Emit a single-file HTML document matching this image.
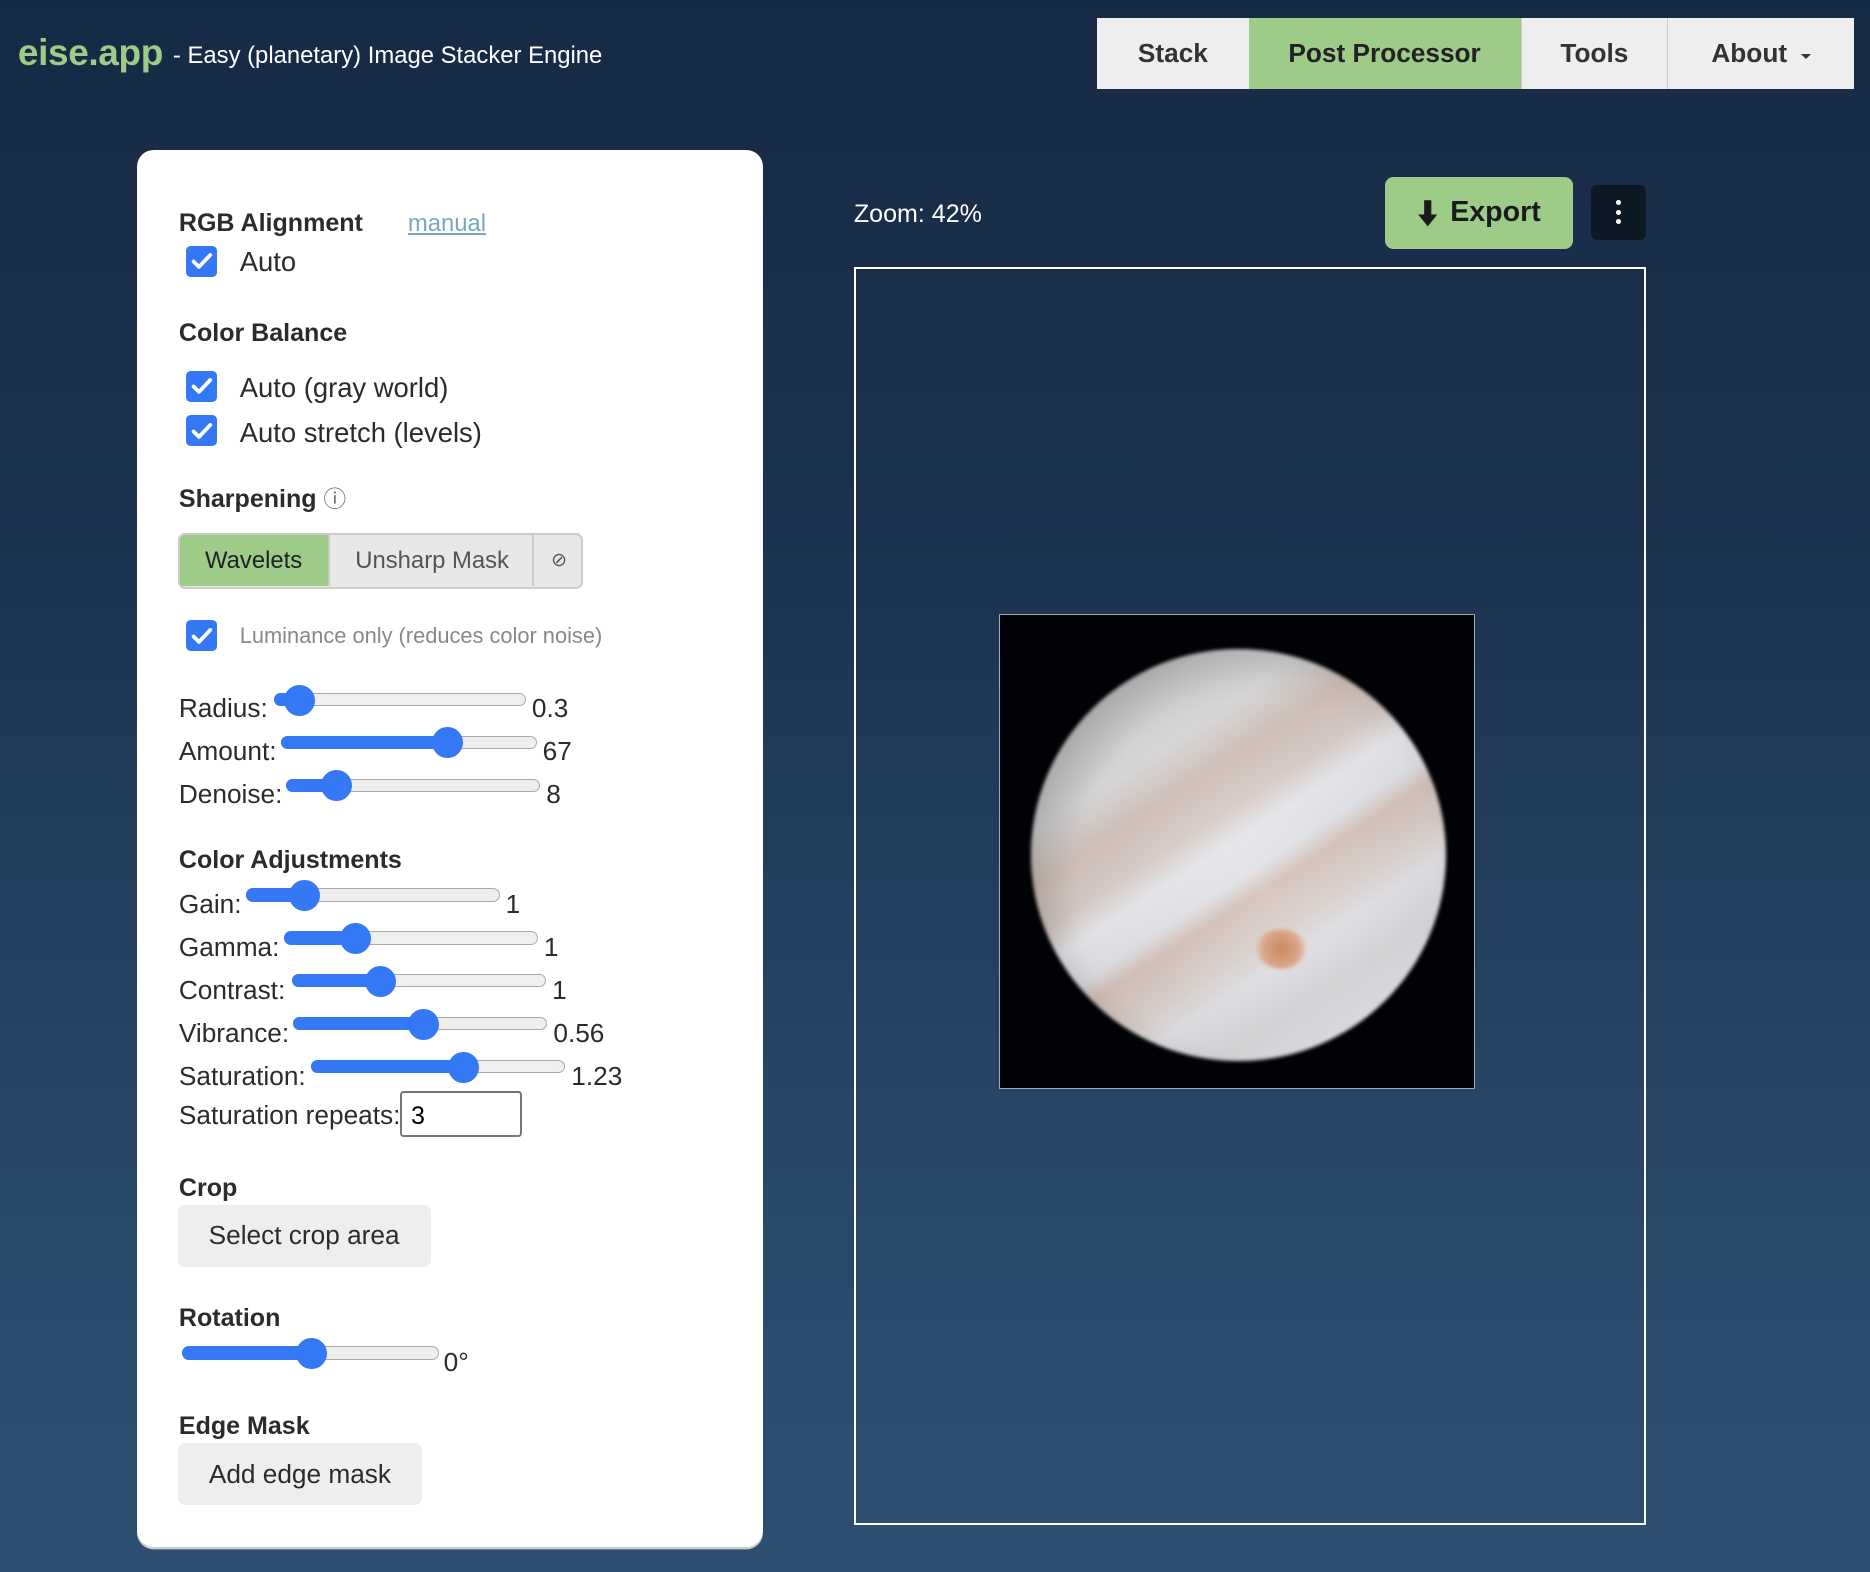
<!DOCTYPE html>
<html><head><meta charset="utf-8">
<style>
html,body{margin:0;padding:0;width:1870px;height:1572px;overflow:hidden;}
body{background:linear-gradient(180deg,#172a45 0%,#1c3350 35%,#2a4a6c 80%,#2d5072 100%);font-family:"Liberation Sans",Arial,sans-serif;}
#w{zoom:1.19260;position:relative;width:1568px;height:1318px;}
.a{position:absolute;white-space:nowrap;line-height:1;}
.nav{position:absolute;top:15px;height:60px;background:#eeeeee;color:#333;font-weight:bold;font-size:22px;display:flex;align-items:center;justify-content:center;box-sizing:border-box;}
.panel{position:absolute;left:115px;top:126px;width:525px;height:1171px;background:#fff;border-radius:14px;box-shadow:0 2px 0 #ccc;}
.h{position:absolute;font-weight:bold;font-size:21px;color:#2b2b2b;line-height:1;white-space:nowrap;}
.t{position:absolute;font-size:22px;color:#2b2b2b;line-height:1;white-space:nowrap;}
.c{font-size:23px;}
.cb{position:absolute;width:26px;height:26px;background:#3478f6;border-radius:4px;}
.cb svg{position:absolute;left:3px;top:3px;}
.tr{position:absolute;height:11px;background:#efefef;border:1px solid #aaa;border-radius:7px;box-sizing:border-box;}
.fi{position:absolute;height:11px;background:#3478f6;border-radius:7px;}
.th{position:absolute;width:26px;height:26px;border-radius:50%;background:#3478f6;}
.btn{position:absolute;background:#eeeeee;border-radius:6px;font-size:22px;color:#2b2b2b;display:flex;align-items:center;justify-content:center;}
</style></head><body><div id="w">

<div class="a" style="left:15px;top:29px;font-size:31px;color:#9ccc87;font-weight:bold;letter-spacing:-0.3px">eise.app</div>
<div class="a" style="left:145px;top:37px;font-size:20px;color:#fff">- Easy (planetary) Image Stacker Engine</div>

<div class="nav" style="left:920px;width:127px">Stack</div>
<div class="nav" style="left:1047px;width:228px;background:#9ccc87;color:#222">Post Processor</div>
<div class="nav" style="left:1275px;width:123px;border-left:1px solid #ccc">Tools</div>
<div class="nav" style="left:1398px;width:157px;border-left:1px solid #ccc">About <span style="display:inline-block;margin-left:12px;border-left:5px solid transparent;border-right:5px solid transparent;border-top:5px solid #333;margin-top:4px"></span></div>

<div class="panel"></div>
<div class="h" style="left:150px;top:177px">RGB Alignment</div>
<div class="t" style="left:342px;top:178px;font-size:20px;color:#7aa7bf;text-decoration:underline">manual</div>
<div class="cb" style="left:156px;top:206px"><svg width="20" height="20" viewBox="0 0 20 20"><path d="M3 10.5l4.5 4.5L17 5" stroke="#fff" stroke-width="3.2" fill="none" stroke-linecap="round" stroke-linejoin="round"/></svg></div>
<div class="t c" style="left:201px;top:208px">Auto</div>

<div class="h" style="left:150px;top:269px">Color Balance</div>
<div class="cb" style="left:156px;top:311px"><svg width="20" height="20" viewBox="0 0 20 20"><path d="M3 10.5l4.5 4.5L17 5" stroke="#fff" stroke-width="3.2" fill="none" stroke-linecap="round" stroke-linejoin="round"/></svg></div>
<div class="t c" style="left:201px;top:314px">Auto (gray world)</div>
<div class="cb" style="left:156px;top:348px"><svg width="20" height="20" viewBox="0 0 20 20"><path d="M3 10.5l4.5 4.5L17 5" stroke="#fff" stroke-width="3.2" fill="none" stroke-linecap="round" stroke-linejoin="round"/></svg></div>
<div class="t c" style="left:201px;top:351px">Auto stretch (levels)</div>

<div class="h" style="left:150px;top:408px">Sharpening <span style="font-weight:normal;color:#666;font-size:19px">ⓘ</span></div>
<div style="position:absolute;left:149px;top:447px;width:340px;height:47px;border:2px solid #ccc;border-radius:6px;box-sizing:border-box;background:#e8e8e8;overflow:hidden">
 <div style="position:absolute;left:0;top:0;width:124px;height:43px;background:#9ccc87;font-size:20px;color:#222;display:flex;align-items:center;justify-content:center">Wavelets</div>
 <div style="position:absolute;left:124px;top:0;width:172px;height:43px;border-left:2px solid #ccc;font-size:20px;color:#555;display:flex;align-items:center;justify-content:center">Unsharp Mask</div>
 <div style="position:absolute;left:295px;top:0;width:43px;height:43px;border-left:2px solid #ccc;font-size:16px;color:#555;display:flex;align-items:center;justify-content:center">⊘</div>
</div>
<div class="cb" style="left:156px;top:520px"><svg width="20" height="20" viewBox="0 0 20 20"><path d="M3 10.5l4.5 4.5L17 5" stroke="#fff" stroke-width="3.2" fill="none" stroke-linecap="round" stroke-linejoin="round"/></svg></div>
<div class="t" style="left:201px;top:524px;font-size:18.3px;color:#888">Luminance only (reduces color noise)</div>

<div class="t" style="left:150px;top:583px">Radius:</div>
<div class="tr" style="left:230px;top:581px;width:211px"></div><div class="fi" style="left:230px;top:581px;width:22px"></div><div class="th" style="left:238px;top:574px"></div>
<div class="t" style="left:446px;top:583px">0.3</div>

<div class="t" style="left:150px;top:619px">Amount:</div>
<div class="tr" style="left:236px;top:617px;width:214px"></div><div class="fi" style="left:236px;top:617px;width:140px"></div><div class="th" style="left:362px;top:610px"></div>
<div class="t" style="left:455px;top:619px">67</div>

<div class="t" style="left:150px;top:655px">Denoise:</div>
<div class="tr" style="left:240px;top:653px;width:213px"></div><div class="fi" style="left:240px;top:653px;width:43px"></div><div class="th" style="left:269px;top:646px"></div>
<div class="t" style="left:458px;top:655px">8</div>

<div class="h" style="left:150px;top:711px">Color Adjustments</div>

<div class="t" style="left:150px;top:747px">Gain:</div>
<div class="tr" style="left:206px;top:745px;width:213px"></div><div class="fi" style="left:206px;top:745px;width:50px"></div><div class="th" style="left:242px;top:738px"></div>
<div class="t" style="left:424px;top:747px">1</div>

<div class="t" style="left:150px;top:783px">Gamma:</div>
<div class="tr" style="left:238px;top:781px;width:213px"></div><div class="fi" style="left:238px;top:781px;width:61px"></div><div class="th" style="left:285px;top:774px"></div>
<div class="t" style="left:456px;top:783px">1</div>

<div class="t" style="left:150px;top:819px">Contrast:</div>
<div class="tr" style="left:245px;top:817px;width:213px"></div><div class="fi" style="left:245px;top:817px;width:75px"></div><div class="th" style="left:306px;top:810px"></div>
<div class="t" style="left:463px;top:819px">1</div>

<div class="t" style="left:150px;top:855px">Vibrance:</div>
<div class="tr" style="left:246px;top:853px;width:213px"></div><div class="fi" style="left:246px;top:853px;width:110px"></div><div class="th" style="left:342px;top:846px"></div>
<div class="t" style="left:464px;top:855px">0.56</div>

<div class="t" style="left:150px;top:891px">Saturation:</div>
<div class="tr" style="left:261px;top:889px;width:213px"></div><div class="fi" style="left:261px;top:889px;width:129px"></div><div class="th" style="left:376px;top:882px"></div>
<div class="t" style="left:479px;top:891px">1.23</div>

<div class="t" style="left:150px;top:924px">Saturation repeats:</div>
<div style="position:absolute;left:335px;top:915px;width:103px;height:38px;border:2px solid #767676;border-radius:3px;box-sizing:border-box;font-size:21px;color:#000;padding:7px 0 0 8px;font-family:'Liberation Sans',sans-serif">3</div>

<div class="h" style="left:150px;top:986px">Crop</div>
<div class="btn" style="left:149px;top:1010px;width:212px;height:52px">Select crop area</div>

<div class="h" style="left:150px;top:1095px">Rotation</div>
<div class="tr" style="left:153px;top:1129px;width:215px"></div><div class="fi" style="left:153px;top:1129px;width:108px"></div><div class="th" style="left:248px;top:1122px"></div>
<div class="t" style="left:372px;top:1131px">0°</div>

<div class="h" style="left:150px;top:1186px">Edge Mask</div>
<div class="btn" style="left:149px;top:1210px;width:205px;height:52px">Add edge mask</div>

<div class="a" style="left:716px;top:169px;font-size:21px;color:#fff">Zoom: 42%</div>
<div style="position:absolute;left:1161px;top:148px;width:158px;height:61px;background:#9ccc87;border-radius:7px;display:flex;align-items:center;justify-content:center;font-weight:bold;font-size:24px;color:#1a1a1a">
<svg width="18" height="24" viewBox="0 0 18 24" style="margin-right:10px"><path d="M6 1h6v12h5l-8 10-8-10h5z" fill="#1a1a1a"/></svg>Export</div>
<div style="position:absolute;left:1334px;top:155px;width:46px;height:46px;background:#0d1825;border-radius:5px">
 <div style="position:absolute;left:21px;top:13px;width:4px;height:4px;border-radius:50%;background:#fff"></div>
 <div style="position:absolute;left:21px;top:21px;width:4px;height:4px;border-radius:50%;background:#fff"></div>
 <div style="position:absolute;left:21px;top:29px;width:4px;height:4px;border-radius:50%;background:#fff"></div>
</div>
<div style="position:absolute;left:716px;top:224px;width:664px;height:1055px;border:2px solid #fff;box-sizing:border-box"></div>

<div style="position:absolute;left:838px;top:515px;width:399px;height:398px;background:#010205;border:1px solid #9ab;box-sizing:border-box;overflow:hidden">
 <div style="position:absolute;left:26px;top:28px;width:348px;height:346px;border-radius:50%;overflow:hidden;filter:blur(1.5px);background:radial-gradient(circle at 55% 55%,#e6e6ea 0%,#d8d8dc 55%,#b4b5b6 82%,#6c6e70 100%)">
   <div style="position:absolute;left:-60px;top:-60px;width:470px;height:470px;transform:rotate(-33deg);background:linear-gradient(180deg,rgba(150,150,140,0.3) 0%,rgba(200,200,195,0.2) 26%,rgba(190,150,125,0.4) 34%,rgba(205,170,150,0.35) 42%,rgba(235,238,242,0.45) 47%,rgba(225,228,235,0.3) 53%,rgba(195,150,125,0.4) 57%,rgba(205,175,155,0.35) 64%,rgba(225,225,230,0.2) 70%,rgba(190,180,180,0.25) 78%,rgba(215,218,225,0.2) 86%,rgba(160,160,165,0.2) 100%)"></div>
   <div style="position:absolute;left:0;top:0;width:100%;height:100%;border-radius:50%;background:radial-gradient(circle at 58% 56%,rgba(0,0,0,0) 60%,rgba(20,20,25,0.2) 85%,rgba(10,10,15,0.75) 100%)"></div>
   <div style="position:absolute;left:188px;top:235px;width:42px;height:34px;border-radius:50%;background:radial-gradient(circle,#c98a62 0%,#d9a586 55%,rgba(230,200,185,0.6) 80%,rgba(230,220,215,0) 100%)"></div>
 </div>
</div>

</div></body></html>
